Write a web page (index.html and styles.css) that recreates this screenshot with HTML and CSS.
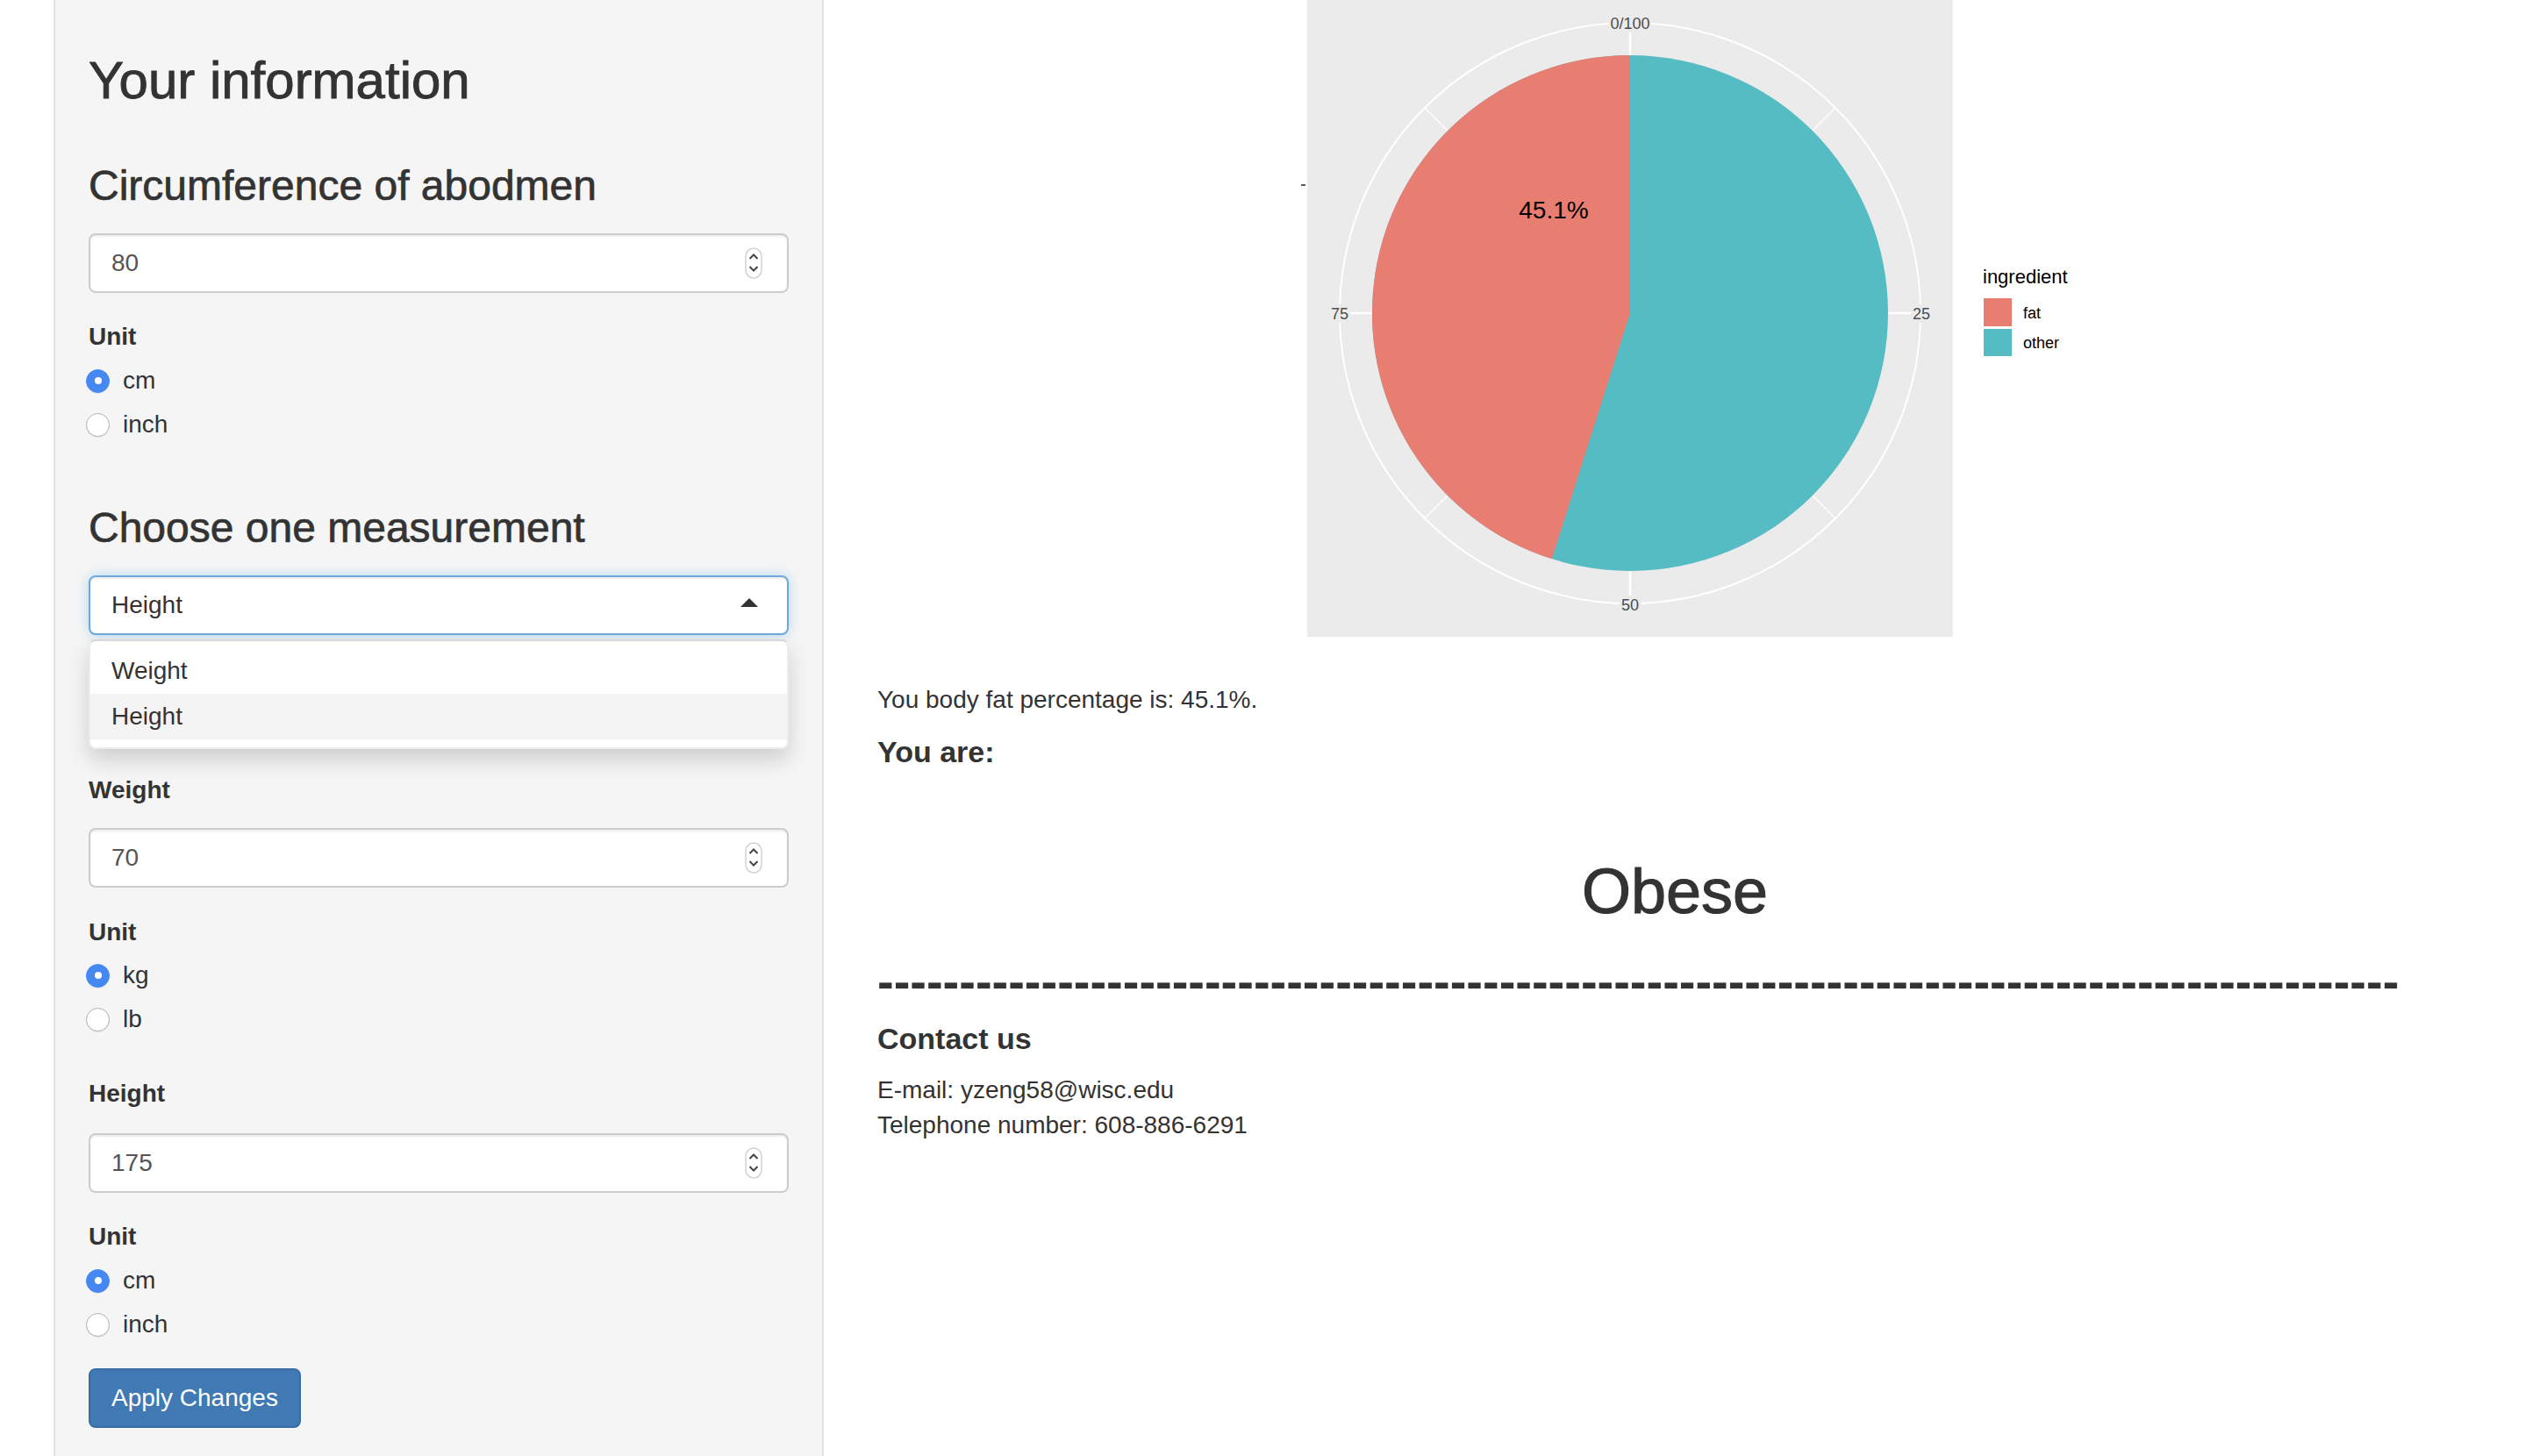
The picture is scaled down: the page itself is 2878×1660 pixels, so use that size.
FILE: index.html
```html
<!DOCTYPE html>
<html lang="en">
<head>
<meta charset="utf-8">
<title>Body fat calculator</title>
<link rel="stylesheet" href="styles.css">
</head>
<body>
<div class="page">
  <aside class="well">
    <h2 class="title">Your information</h2>

    <h3 class="sec">Circumference of abodmen</h3>
    <div class="num num-a"><span class="val">80</span>
      <svg class="spin" width="20" height="36" viewBox="0 0 20 36"><rect x="1" y="1" width="18" height="34" rx="9" fill="#fff" stroke="#d2d2d2" stroke-width="1.5"/><polyline points="5.5,13 10,8.5 14.5,13" fill="none" stroke="#444" stroke-width="2"/><polyline points="5.5,22 10,26.5 14.5,22" fill="none" stroke="#444" stroke-width="2"/></svg>
    </div>
    <div class="lbl unit-a">Unit</div>
    <div class="radios radios-a">
      <div class="radio"><span class="dot on"></span><span>cm</span></div>
      <div class="radio"><span class="dot"></span><span>inch</span></div>
    </div>

    <h3 class="sec sec-b">Choose one measurement</h3>
    <div class="selectwrap">
      <div class="select"><span>Height</span>
        <svg class="caret" width="20" height="10" viewBox="0 0 20 10"><polygon points="0,10 10,0 20,10" fill="#333"/></svg>
      </div>
      <div class="dropdown">
        <div class="opt">Weight</div>
        <div class="opt active">Height</div>
      </div>
    </div>

    <div class="lbl weight-lbl">Weight</div>
    <div class="num num-b"><span class="val">70</span>
      <svg class="spin" width="20" height="36" viewBox="0 0 20 36"><rect x="1" y="1" width="18" height="34" rx="9" fill="#fff" stroke="#d2d2d2" stroke-width="1.5"/><polyline points="5.5,13 10,8.5 14.5,13" fill="none" stroke="#444" stroke-width="2"/><polyline points="5.5,22 10,26.5 14.5,22" fill="none" stroke="#444" stroke-width="2"/></svg>
    </div>
    <div class="lbl unit-b">Unit</div>
    <div class="radios radios-b">
      <div class="radio"><span class="dot on"></span><span>kg</span></div>
      <div class="radio"><span class="dot"></span><span>lb</span></div>
    </div>

    <div class="lbl height-lbl">Height</div>
    <div class="num num-c"><span class="val">175</span>
      <svg class="spin" width="20" height="36" viewBox="0 0 20 36"><rect x="1" y="1" width="18" height="34" rx="9" fill="#fff" stroke="#d2d2d2" stroke-width="1.5"/><polyline points="5.5,13 10,8.5 14.5,13" fill="none" stroke="#444" stroke-width="2"/><polyline points="5.5,22 10,26.5 14.5,22" fill="none" stroke="#444" stroke-width="2"/></svg>
    </div>
    <div class="lbl unit-c">Unit</div>
    <div class="radios radios-c">
      <div class="radio"><span class="dot on"></span><span>cm</span></div>
      <div class="radio"><span class="dot"></span><span>inch</span></div>
    </div>

    <div class="actions"><button class="btn" type="button">Apply Changes</button></div>
  </aside>

  <main class="main">
    <svg class="plot" width="1818" height="760" viewBox="0 0 1818 760">
      <rect x="490" y="0" width="736" height="726" fill="#ebebeb"/>
      <circle cx="858" cy="357" r="331" fill="none" stroke="#fff" stroke-width="2"/>
      <line x1="858" y1="357" x2="858" y2="26" stroke="#fff" stroke-width="2.5"/>
      <line x1="858" y1="357" x2="858" y2="688" stroke="#fff" stroke-width="2.5"/>
      <line x1="858" y1="357" x2="527" y2="357" stroke="#fff" stroke-width="2.5"/>
      <line x1="858" y1="357" x2="1189" y2="357" stroke="#fff" stroke-width="2.5"/>
      <line x1="858" y1="357" x2="1092" y2="123" stroke="#fff" stroke-width="1.2"/>
      <line x1="858" y1="357" x2="1092" y2="591" stroke="#fff" stroke-width="1.2"/>
      <line x1="858" y1="357" x2="624" y2="591" stroke="#fff" stroke-width="1.2"/>
      <line x1="858" y1="357" x2="624" y2="123" stroke="#fff" stroke-width="1.2"/>
      <circle cx="858" cy="357" r="294" fill="#54bcc2"/>
      <path d="M858,357 L858,63 A294,294 0 0 0 768.9,637.2 Z" fill="#e87d72"/>
      <rect x="834" y="16" width="48" height="21" fill="#ebebeb"/>
      <rect x="846" y="679" width="24" height="21" fill="#ebebeb"/>
      <rect x="515" y="347" width="24" height="21" fill="#ebebeb"/>
      <rect x="1178" y="347" width="24" height="21" fill="#ebebeb"/>
      <g class="axis" font-size="18" fill="#4d4d4d" text-anchor="middle">
        <text x="858" y="33">0/100</text>
        <text x="858" y="696">50</text>
        <text x="527" y="364">75</text>
        <text x="1190" y="364">25</text>
      </g>
      <text class="axis" x="771" y="249" font-size="28" fill="#000" text-anchor="middle">45.1%</text>
      <line x1="483" y1="211" x2="488" y2="211" stroke="#222" stroke-width="1.5"/>
      <text class="axis" x="1260" y="323" font-size="22" fill="#000">ingredient</text>
      <rect x="1261" y="340" width="32" height="32" fill="#e87d72"/>
      <rect x="1261" y="375" width="32" height="31" fill="#54bcc2"/>
      <text class="axis" x="1306" y="363" font-size="18" fill="#000">fat</text>
      <text class="axis" x="1306" y="397" font-size="18" fill="#000">other</text>
    </svg>

    <p class="pct">You body fat percentage is: 45.1%.</p>
    <h4 class="youare">You are:</h4>
    <h1 class="status">Obese</h1>
    <h3 class="dashes">---------------------------------------------------------------------------------------------</h3>
    <h4 class="contact">Contact us</h4>
    <div class="info">
      <p>E-mail: yzeng58@wisc.edu</p>
      <p>Telephone number: 608-886-6291</p>
    </div>
  </main>
</div>
</body>
</html>
```
FILE: styles.css
```css
html, body {
  margin: 0;
  padding: 0;
  background: #fff;
}

body {
  font-family: "Liberation Sans", Arial, sans-serif;
  color: #333;
  font-size: 28px;
  line-height: 40px;
  overflow: hidden;
}

.page {
  display: flex;
  height: 1660px;
  box-sizing: border-box;
  padding: 0 60px 0 61px;
}

/* ---------- sidebar ---------- */
.well {
  width: 878px;
  flex: none;
  box-sizing: border-box;
  background: #f5f5f5;
  border-left: 2px solid #e3e3e3;
  border-right: 2px solid #e3e3e3;
  padding: 59px 38px 0;
}

.title {
  margin: 0;
  font-size: 60px;
  line-height: 66px;
  font-weight: 400;
  -webkit-text-stroke: 0.9px #333;
}

.sec {
  margin: 60px 0 0;
  font-size: 48px;
  line-height: 53px;
  font-weight: 400;
  -webkit-text-stroke: 0.7px #333;
}

.sec-b { margin-top: 71px; }

.num {
  height: 68px;
  box-sizing: border-box;
  background: #fff;
  border: 2px solid #ccc;
  border-radius: 8px;
  box-shadow: inset 0 2px 2px rgba(0, 0, 0, 0.075);
  display: flex;
  align-items: center;
  justify-content: space-between;
  padding: 0 28px 0 24px;
  color: #555;
}

.spin { display: block; }

.num-a { margin-top: 28px; }
.num-b { margin-top: 23px; }
.num-c { margin-top: 25px; }

.lbl {
  font-weight: 700;
  line-height: 40px;
}

.unit-a { margin-top: 30px; }
.unit-b { margin-top: 31px; }
.unit-c { margin-top: 30px; }
.weight-lbl { margin-top: 157px; }
.height-lbl { margin-top: 45px; }

.radios {
  display: flex;
  flex-direction: column;
  gap: 10px;
}

.radios-a { margin-top: 10px; }
.radios-b { margin-top: 9px; }
.radios-c { margin-top: 10px; }

.radio {
  display: flex;
  align-items: center;
  height: 40px;
}

.dot {
  width: 27px;
  height: 27px;
  box-sizing: border-box;
  border-radius: 50%;
  margin-left: -3px;
  margin-right: 15px;
  background: #fff;
  border: 1.5px solid #b0b0b0;
  box-shadow: 0 1px 1px rgba(0, 0, 0, 0.06);
  display: flex;
  align-items: center;
  justify-content: center;
}

.dot.on {
  background: #4688f1;
  border-color: #4688f1;
}

.dot.on::after {
  content: "";
  width: 8px;
  height: 8px;
  border-radius: 50%;
  background: #fff;
}

.selectwrap {
  position: relative;
  margin-top: 28px;
}

.select {
  height: 68px;
  box-sizing: border-box;
  background: #fff;
  border: 2px solid #6ea9de;
  border-radius: 8px;
  box-shadow: inset 0 2px 2px rgba(0, 0, 0, 0.075), 0 0 14px rgba(102, 175, 233, 0.45);
  display: flex;
  align-items: center;
  justify-content: space-between;
  padding: 0 33px 0 24px;
  color: #333;
}

.caret {
  display: block;
  margin-bottom: 6px;
}

.dropdown {
  position: absolute;
  top: 73px;
  left: 0;
  right: 0;
  z-index: 10;
  background: #fff;
  border: 2px solid #ececec;
  border-top-color: #d8d8d8;
  border-radius: 8px;
  box-shadow: 0 12px 24px rgba(0, 0, 0, 0.16);
  padding: 8px 0 9px;
}

.opt {
  padding: 6px 24px;
  line-height: 40px;
  color: #333;
}

.opt.active {
  background: #f4f4f4;
}

.actions { margin-top: 30px; }

.btn {
  height: 68px;
  box-sizing: border-box;
  padding: 0 24px;
  font-family: "Liberation Sans", Arial, sans-serif;
  font-size: 28px;
  line-height: 40px;
  color: #fff;
  background: #4079b3;
  border: 2px solid #386ca3;
  border-radius: 8px;
}

/* ---------- main panel ---------- */
.main {
  flex: 1;
  min-width: 0;
  margin-left: 61px;
}

.plot {
  display: block;
}

.axis {
  font-family: "Liberation Sans", Arial, sans-serif;
}

.pct {
  margin: 18px 0 0;
}

.youare {
  margin: 19px 0 0;
  font-size: 34px;
  line-height: 40px;
  font-weight: 700;
}

.status {
  margin: 100px 0 0;
  font-size: 72px;
  line-height: 79px;
  font-weight: 400;
  text-align: center;
  -webkit-text-stroke: 1.1px #333;
}

.dashes {
  margin: 36px 0 0;
  font-size: 56px;
  line-height: 53px;
  font-weight: 700;
  white-space: nowrap;
}

.contact {
  margin: 19px 0 0;
  font-size: 34px;
  line-height: 40px;
  font-weight: 700;
}

.info {
  margin-top: 19px;
}

.info p {
  margin: 0;
}
```
